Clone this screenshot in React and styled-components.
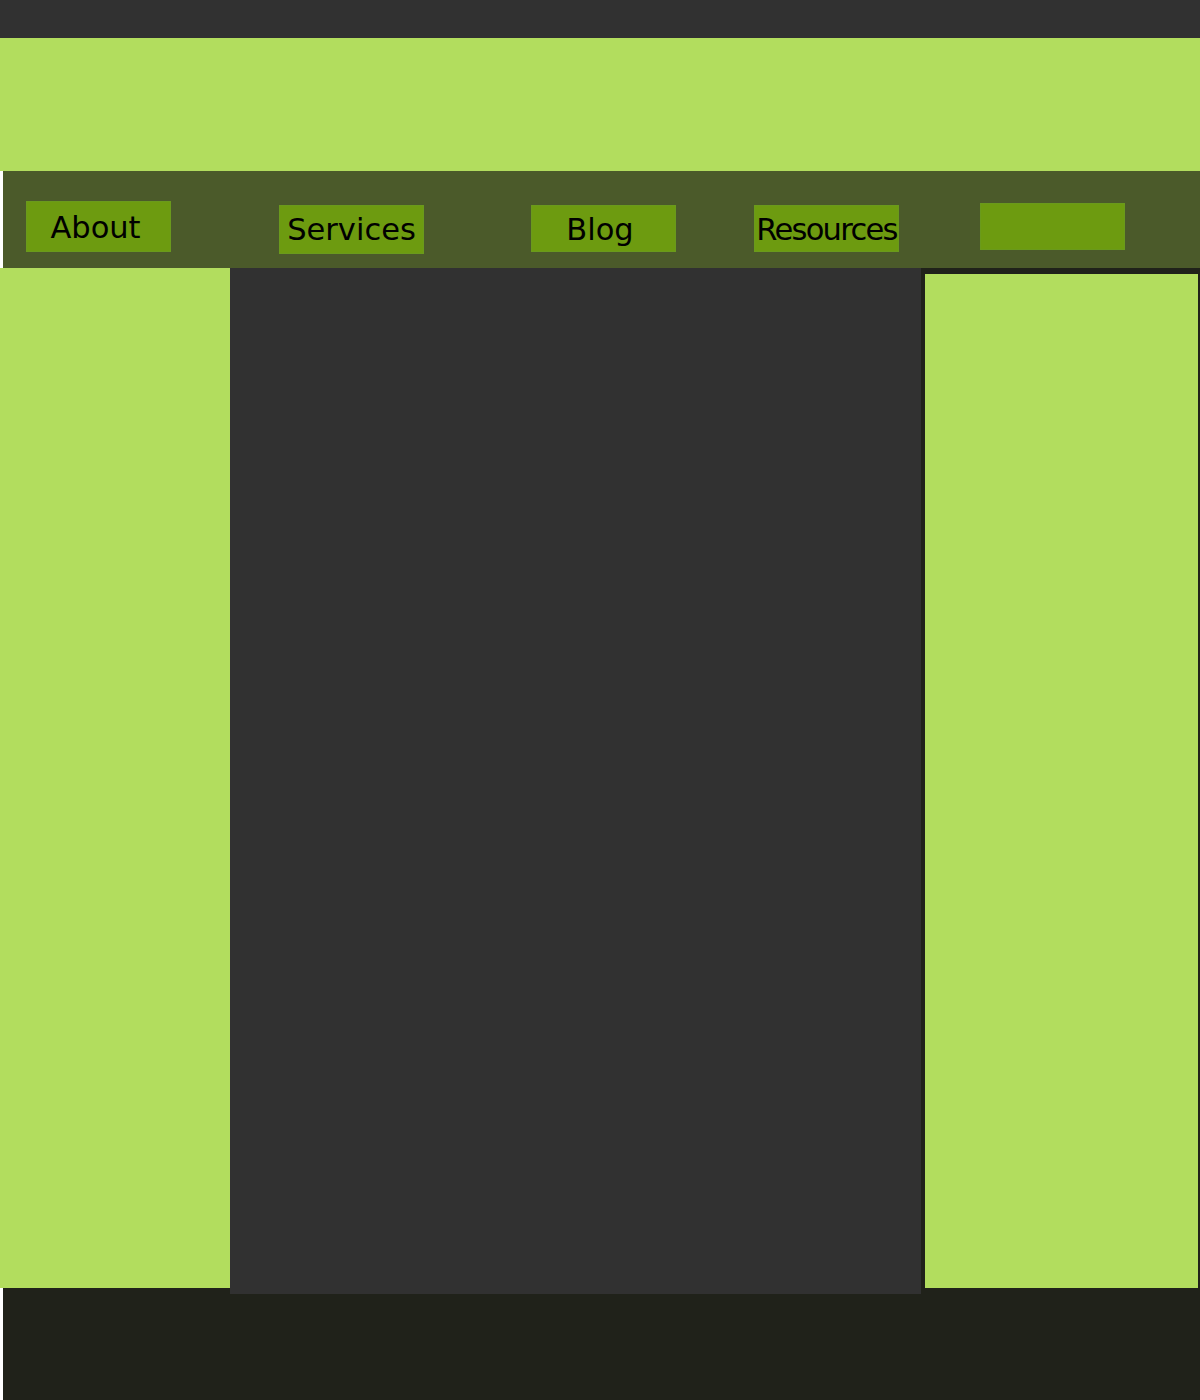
import React from "react";
import styled, { createGlobalStyle } from "styled-components";

const GlobalStyle = createGlobalStyle`
  html, body {
    margin: 0;
    padding: 0;
    background: #ffffff;
  }
  body {
    font-family: "DejaVu Sans", "Liberation Sans", sans-serif;
  }
`;

const Page = styled.div`
  display: flex;
  flex-direction: column;
  width: 1200px;
  height: 1400px;
  overflow: hidden;
`;

const TopBar = styled.div`
  height: 38px;
  background: #313131;
`;

const Header = styled.header`
  height: 133px;
  background: #b2dd5e;
`;

const Nav = styled.nav`
  display: flex;
  align-items: flex-start;
  height: 97px;
  margin-left: 3px;
  padding-left: 23px;
  background: #4b5a2a;
`;

const NavItem = styled.a`
  display: block;
  box-sizing: border-box;
  width: 145px;
  height: ${(p) => p.$height}px;
  margin-top: ${(p) => p.$top}px;
  margin-left: ${(p) => p.$offset}px;
  padding-top: ${(p) => p.$pad}px;
  padding-right: ${(p) => p.$nudge || 0}px;
  background: #6d9b10;
  border: 1px solid #6a9a1c;
  color: #000000;
  font-size: 30.5px;
  line-height: 35px;
  letter-spacing: ${(p) => p.$tight || 0}px;
  text-align: center;
  white-space: nowrap;
  text-decoration: none;
`;

const Body = styled.div`
  display: flex;
  align-items: flex-start;
  height: 1020px;
`;

const LeftSidebar = styled.aside`
  width: 230px;
  height: 100%;
  background: #b2dd5e;
`;

const Main = styled.main`
  position: relative;
  z-index: 1;
  width: 691px;
  height: 1026px;
  background: #313131;
`;

const RightSidebar = styled.aside`
  box-sizing: border-box;
  display: flex;
  width: 279px;
  height: 100%;
  padding: 6px 2px 0 4px;
  background: #20221a;
`;

const RightPanel = styled.div`
  flex: 1;
  background: #b2dd5e;
`;

const Footer = styled.footer`
  height: 112px;
  margin-left: 3px;
  background: #20221a;
`;

const links = [
  { label: "About", offset: 0, top: 30, height: 51, pad: 8, nudge: 6 },
  { label: "Services", offset: 108, top: 34, height: 49, pad: 6, nudge: 0 },
  { label: "Blog", offset: 107, top: 34, height: 47, pad: 6, nudge: 7 },
  { label: "Resources", offset: 78, top: 34, height: 47, pad: 6, tight: -1.7 },
  { label: "", offset: 81, top: 32, height: 47, pad: 6 },
];

export default function App() {
  return (
    <>
      <GlobalStyle />
      <Page>
        <TopBar />
        <Header />
        <Nav>
          {links.map((l, i) => (
            <NavItem
              key={i}
              href="#"
              $offset={l.offset}
              $top={l.top}
              $height={l.height}
              $pad={l.pad}
              $nudge={l.nudge}
              $tight={l.tight}
            >
              {l.label}
            </NavItem>
          ))}
        </Nav>
        <Body>
          <LeftSidebar />
          <Main />
          <RightSidebar>
            <RightPanel />
          </RightSidebar>
        </Body>
        <Footer />
      </Page>
    </>
  );
}
